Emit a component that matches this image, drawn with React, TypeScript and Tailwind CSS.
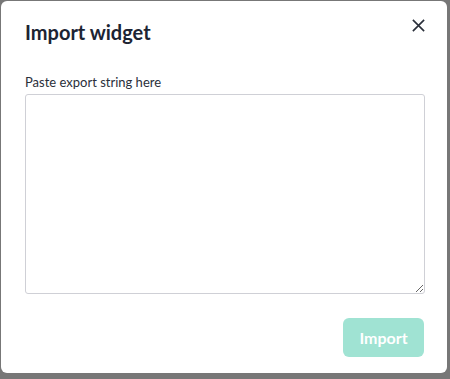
import React, { useState } from 'react';

const ImportWidgetModal = () => {
  const [value, setValue] = useState('');

  return (
    <div className="w-[450px] h-[379px] bg-[#777777] pt-px pl-px font-['Lato',sans-serif] overflow-hidden">
      <div className="w-[446px] h-[372px] bg-white rounded-md flex flex-col px-6">
        <div className="flex items-center justify-between pt-[17px]">
          <h2 className="text-[20px] font-bold text-[#1c2433] leading-7">Import widget</h2>
          <button className="text-[#2a2f3a] -mr-[3px] mt-[-14px]" aria-label="Close">
            <svg width="15" height="15" viewBox="0 0 16 16" fill="none" stroke="currentColor" strokeWidth="1.7">
              <path d="M2 2 L14 14 M14 2 L2 14" />
            </svg>
          </button>
        </div>

        <label className="mt-[28px] text-[13px] text-[#2a2f3a] leading-4">Paste export string here</label>
        <textarea
          value={value}
          onChange={(e) => setValue(e.target.value)}
          className="mt-[4px] w-[400px] h-[200px] border border-[#cfd0d6] rounded-[3px] outline-none p-2 text-sm"
        />

        <div className="flex justify-end mt-[24px] mr-[-1px]">
          <button
            disabled
            className="w-[81px] h-[39px] rounded-md bg-[#a0e3d3] text-white font-bold text-[16px]"
          >
            Import
          </button>
        </div>
      </div>
    </div>
  );
};

export default function App() {
  return <ImportWidgetModal />;
}
